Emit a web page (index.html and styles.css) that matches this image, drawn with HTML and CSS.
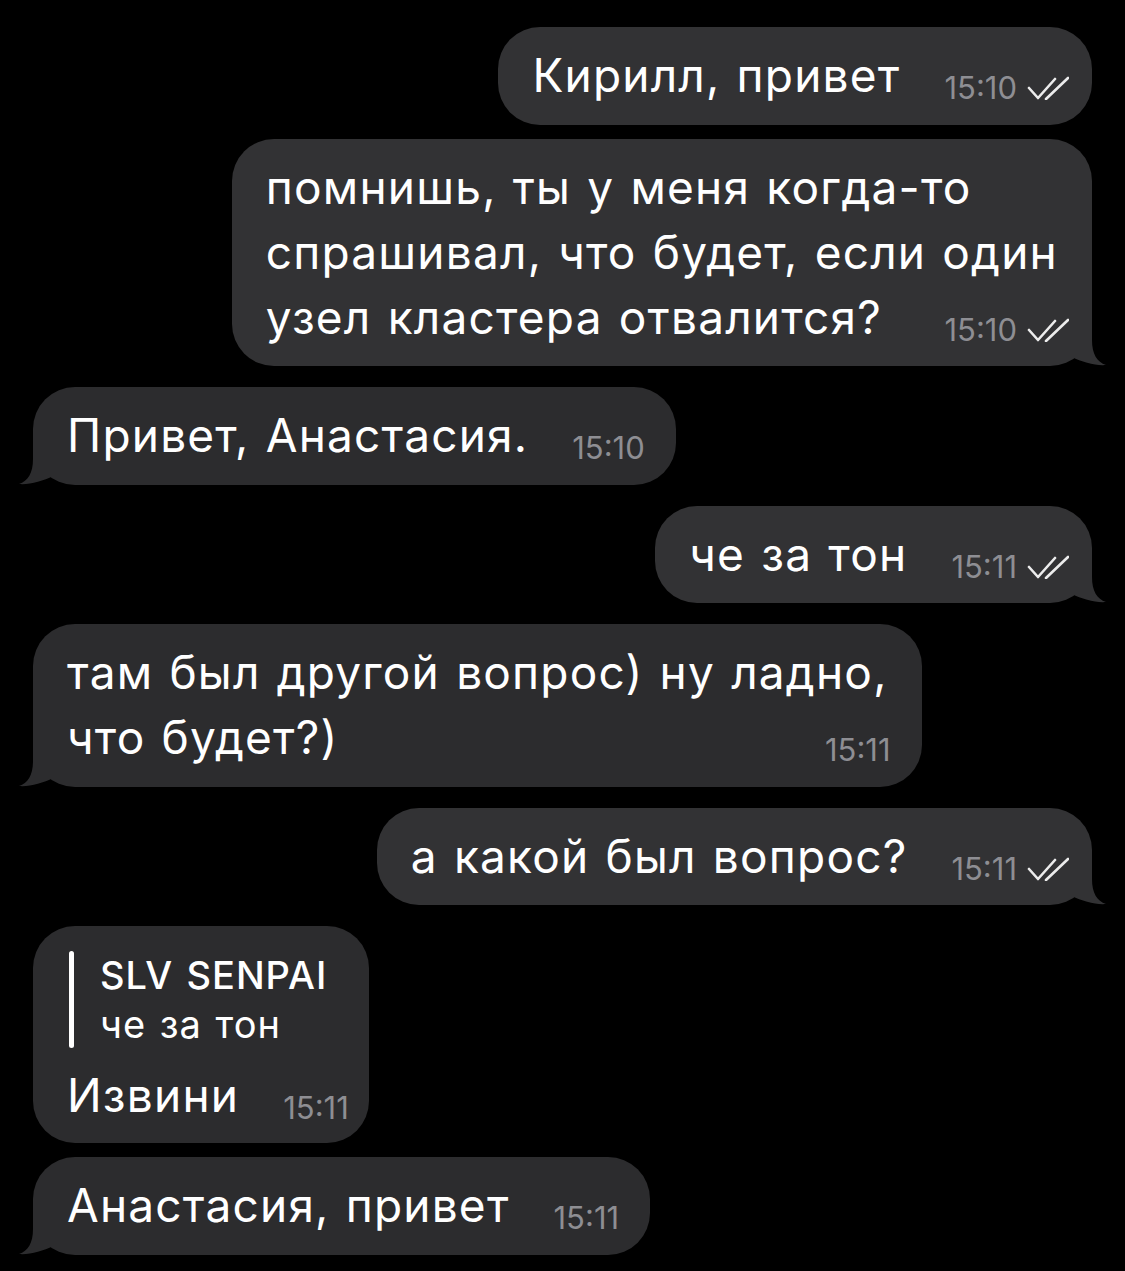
FILE: index.html
```html
<!DOCTYPE html>
<html lang="ru">
<head>
    <meta charset="UTF-8">
    <meta name="viewport" content="width=device-width, initial-scale=1.0">
    <title>Чат</title>
    <link rel="stylesheet" href="styles.css">
</head>
<body>
    <div class="chat">
        <div class="msg out">
            <div class="bubble">Кирилл, привет<span class="meta"><span class="time">15:10</span><svg class="checks" viewBox="0 0 42 24"><path d="M2 12 L11 22 L28 3 M19 23 L41 2"/></svg></span></div>
        </div>
        <div class="msg out">
            <div class="bubble">помнишь, ты у меня когда-то<br>спрашивал, что будет, если один<br>узел кластера отвалится?<span class="meta"><span class="time">15:10</span><svg class="checks" viewBox="0 0 42 24"><path d="M2 12 L11 22 L28 3 M19 23 L41 2"/></svg></span><svg class="tail" viewBox="0 0 38 46"><path d="M22 0 L22 20 C22 34 27 42 36 45 C26 46 12 42 2 37 L2 0 Z"/></svg></div>
        </div>
        <div class="msg in new-group">
            <div class="bubble">Привет, Анастасия.<span class="meta"><span class="time">15:10</span></span><svg class="tail" viewBox="0 0 38 46"><path d="M22 0 L22 20 C22 34 27 42 36 45 C26 46 12 42 2 37 L2 0 Z"/></svg></div>
        </div>
        <div class="msg out new-group">
            <div class="bubble">че за тон<span class="meta"><span class="time">15:11</span><svg class="checks" viewBox="0 0 42 24"><path d="M2 12 L11 22 L28 3 M19 23 L41 2"/></svg></span><svg class="tail" viewBox="0 0 38 46"><path d="M22 0 L22 20 C22 34 27 42 36 45 C26 46 12 42 2 37 L2 0 Z"/></svg></div>
        </div>
        <div class="msg in new-group">
            <div class="bubble">там был другой вопрос) ну ладно,<br>что будет?)<span class="meta"><span class="time">15:11</span></span><svg class="tail" viewBox="0 0 38 46"><path d="M22 0 L22 20 C22 34 27 42 36 45 C26 46 12 42 2 37 L2 0 Z"/></svg></div>
        </div>
        <div class="msg out new-group">
            <div class="bubble">а какой был вопрос?<span class="meta"><span class="time">15:11</span><svg class="checks" viewBox="0 0 42 24"><path d="M2 12 L11 22 L28 3 M19 23 L41 2"/></svg></span><svg class="tail" viewBox="0 0 38 46"><path d="M22 0 L22 20 C22 34 27 42 36 45 C26 46 12 42 2 37 L2 0 Z"/></svg></div>
        </div>
        <div class="msg in new-group">
            <div class="bubble has-reply">
                <div class="reply">
                    <div class="reply-bar"></div>
                    <div class="reply-body">
                        <div class="reply-name">SLV SENPAI</div>
                        <div class="reply-text">че за тон</div>
                    </div>
                </div>
                Извини<span class="meta"><span class="time">15:11</span></span>
            </div>
        </div>
        <div class="msg in">
            <div class="bubble">Анастасия, привет<span class="meta"><span class="time">15:11</span></span><svg class="tail" viewBox="0 0 38 46"><path d="M22 0 L22 20 C22 34 27 42 36 45 C26 46 12 42 2 37 L2 0 Z"/></svg></div>
        </div>
    </div>
</body>
</html>
```

FILE: styles.css
```css
body {
    margin: 0;
    background-color: #000;
    font-family: Inter, Roboto, "Noto Sans", sans-serif;
    color: #fff;
}
.chat {
    display: flex;
    flex-direction: column;
    gap: 14px;
    padding: 27px 33px;
}
.msg {
    display: flex;
}
.msg.new-group {
    margin-top: 7px;
}
.msg.out {
    justify-content: flex-end;
}
.msg.in {
    justify-content: flex-start;
}
.bubble {
    position: relative;
    display: flow-root;
    padding: 16px 34px 16.5px;
    font-size: 46px;
    line-height: 65px;
    letter-spacing: 1.2px;
    word-spacing: 2px;
    border-radius: 42px;
}
.out .bubble {
    background-color: #323234;
}
.in .bubble {
    background-color: #2c2c2e;
}
.meta {
    float: right;
    display: flex;
    align-items: center;
    gap: 10px;
    height: 28px;
    margin: 31px -11px 0 44px;
}
.in .meta {
    margin-right: -3px;
}
.time {
    font-size: 31px;
    line-height: 28px;
    letter-spacing: 0;
    color: #8e8e93;
}
.checks {
    width: 42px;
    height: 24px;
    fill: none;
    stroke: #ececec;
    stroke-width: 2.6;
    stroke-linecap: round;
    stroke-linejoin: round;
}
.tail {
    position: absolute;
    bottom: 0;
    width: 38px;
    height: 46px;
}
.out .tail {
    right: -16px;
    fill: #323234;
}
.in .tail {
    left: -16px;
    fill: #2c2c2e;
    transform: scaleX(-1);
}
.bubble.has-reply {
    padding-top: 25px;
    padding-right: 36px;
    padding-bottom: 15px;
}
.in .has-reply .meta {
    margin-right: -16px;
}
.reply {
    display: flex;
    gap: 26px;
    margin: 0 0 15px 2px;
}
.reply-bar {
    width: 5px;
    border-radius: 3px;
    background-color: #fff;
}
.reply-body {
    font-size: 38px;
    line-height: 48.5px;
    letter-spacing: 1px;
}
.reply-name {
    font-weight: 500;
}
```
